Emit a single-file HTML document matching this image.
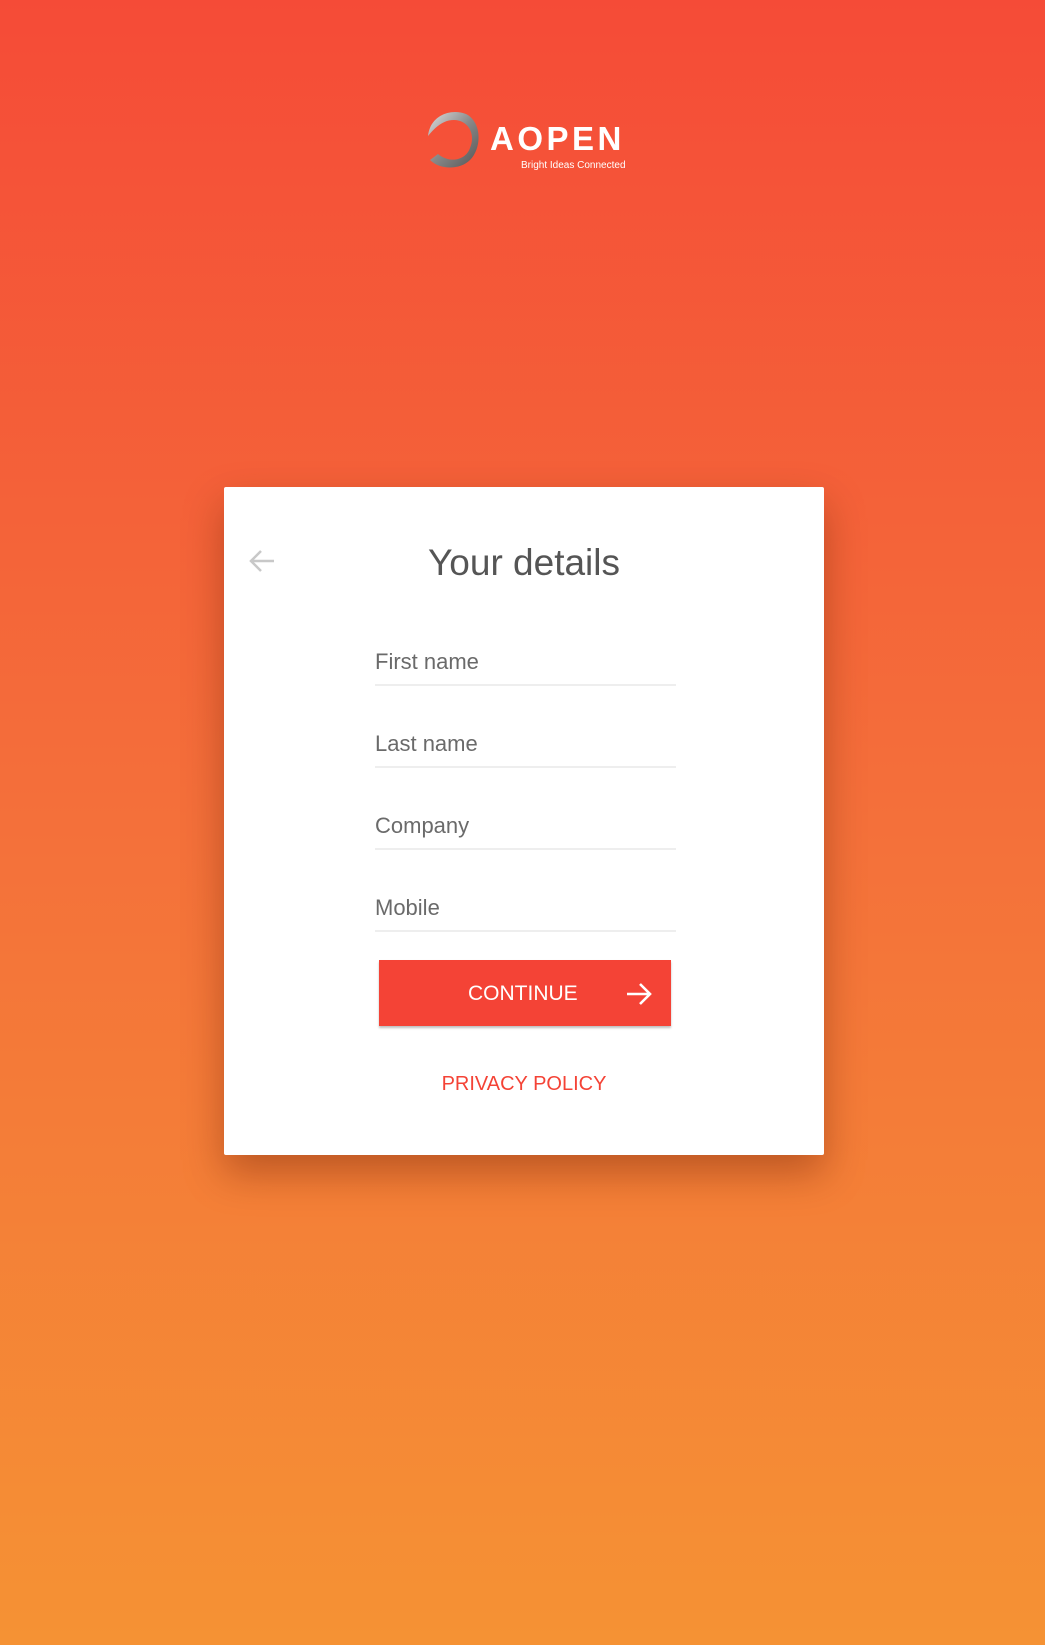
<!DOCTYPE html>
<html><head><meta charset="utf-8"><style>
html,body{margin:0;padding:0}
body{width:1045px;height:1645px;background:linear-gradient(180deg,#f54b37 0%,#f4703a 50%,#f59234 100%);font-family:"Liberation Sans",sans-serif;position:relative;overflow:hidden}
.card{position:absolute;left:224px;top:487px;width:600px;height:668px;background:#fff;border-radius:2px;box-shadow:0 18px 40px rgba(120,40,10,.45)}
.t{position:absolute;width:600px;text-align:center;top:542px;font-size:37px;color:#555;}
.f{position:absolute;left:375px;width:301px;border-bottom:2px solid #eee;font-size:22px;color:#6a6a6a;height:35px}
.btn{position:absolute;left:379px;top:960px;width:292px;height:66px;background:#f44336;box-shadow:0 2px 2px rgba(0,0,0,.25)}
</style></head><body>
<svg style="position:absolute;left:420px;top:108px" width="66" height="64" viewBox="0 0 66 64">
<defs><linearGradient id="g" x1="0" y1="0" x2="1" y2="1"><stop offset="0" stop-color="#ddd"/><stop offset=".5" stop-color="#888"/><stop offset="1" stop-color="#555"/></linearGradient></defs>
<path d="M8 28 C10 8 30 0 46 6 C62 14 62 40 50 52 C40 62 20 62 10 52 L18 46 C30 56 46 52 50 40 C56 26 48 12 34 12 C24 12 16 18 8 28Z" fill="url(#g)"/>
</svg>
<div style="position:absolute;left:490px;top:120px;font-size:33px;font-weight:bold;color:#fff;letter-spacing:3.5px">AOPEN</div>
<div style="position:absolute;left:521px;top:160px;font-size:10px;color:#fff">Bright Ideas Connected</div>
<div class="card"></div>
<div class="t" style="left:224px">Your details</div>
<svg style="position:absolute;left:248px;top:548px" width="28" height="26" viewBox="0 0 28 26"><path d="M26 13H3M13 3L3 13l10 10" stroke="#c8c8c8" stroke-width="2.5" fill="none"/></svg>
<div class="f" style="top:649px">First name</div>
<div class="f" style="top:731px">Last name</div>
<div class="f" style="top:813px">Company</div>
<div class="f" style="top:895px">Mobile</div>
<div class="btn"><span style="position:absolute;left:89px;top:22px;color:#fff;font-size:21px">CONTINUE</span>
<svg style="position:absolute;left:246px;top:21px" width="28" height="26" viewBox="0 0 28 26"><path d="M2 13h23M15 3l10 10-10 10" stroke="#fff" stroke-width="2.6" fill="none"/></svg></div>
<div style="position:absolute;left:224px;width:600px;text-align:center;top:1073px;font-size:20px;color:#f44336">PRIVACY POLICY</div>
</body></html>
